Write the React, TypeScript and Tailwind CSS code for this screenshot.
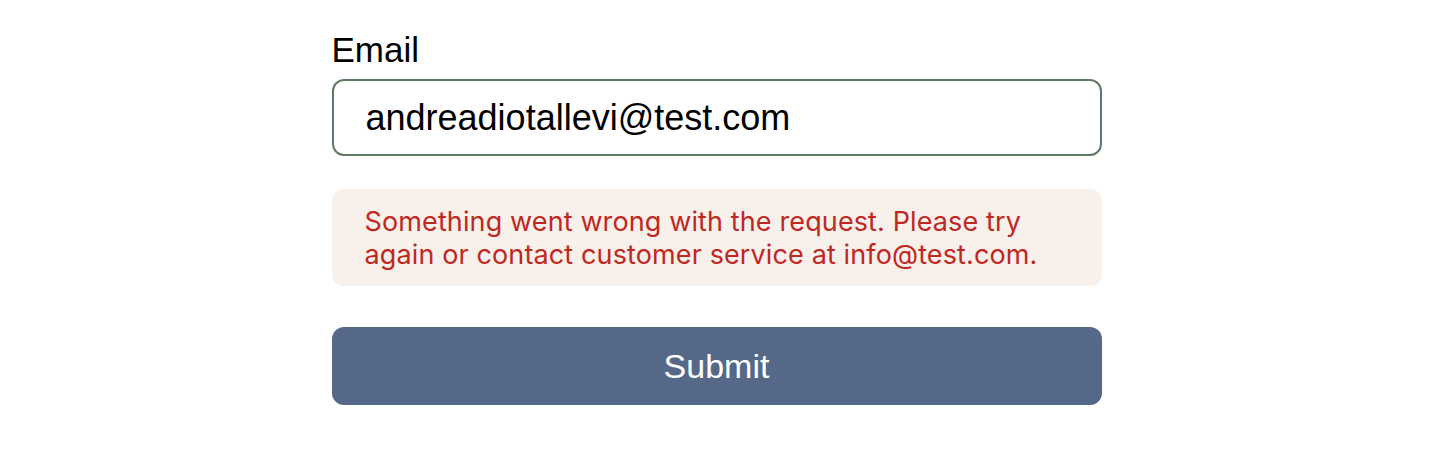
export default function App() {
  return (
    <div className="flex justify-center bg-white min-h-[450px] pl-[1px]">
      <form className="w-[770px] pt-[29px] flex flex-col" onSubmit={(e) => e.preventDefault()}>
        <label htmlFor="email" className="text-[35px] leading-[42px] text-black font-['Liberation_Sans',Arial,sans-serif]">
          Email
        </label>
        <input
          id="email"
          type="email"
          defaultValue="andreadiotallevi@test.com"
          className="mt-[8px] h-[77px] w-full rounded-[12px] border-2 border-[#5f7a62] px-[32px] text-[36px] text-black outline-none font-['Liberation_Sans',Arial,sans-serif]"
        />
        <div className="mt-[33px] rounded-[12px] bg-[#f7f0eb] pl-[33px] pr-[40px] pt-[16px] pb-[15px] text-[27px] leading-[33px] tracking-[0.12px] text-[#c0281f] font-['Inter',sans-serif]">
          Something went wrong with the request. Please try again or contact customer service at info@test.com.
        </div>
        <button
          type="submit"
          className="mt-[41px] h-[78px] w-full rounded-[12px] bg-[#566888] text-[34px] text-white font-['Liberation_Sans',Arial,sans-serif]"
        >
          Submit
        </button>
      </form>
    </div>
  )
}
